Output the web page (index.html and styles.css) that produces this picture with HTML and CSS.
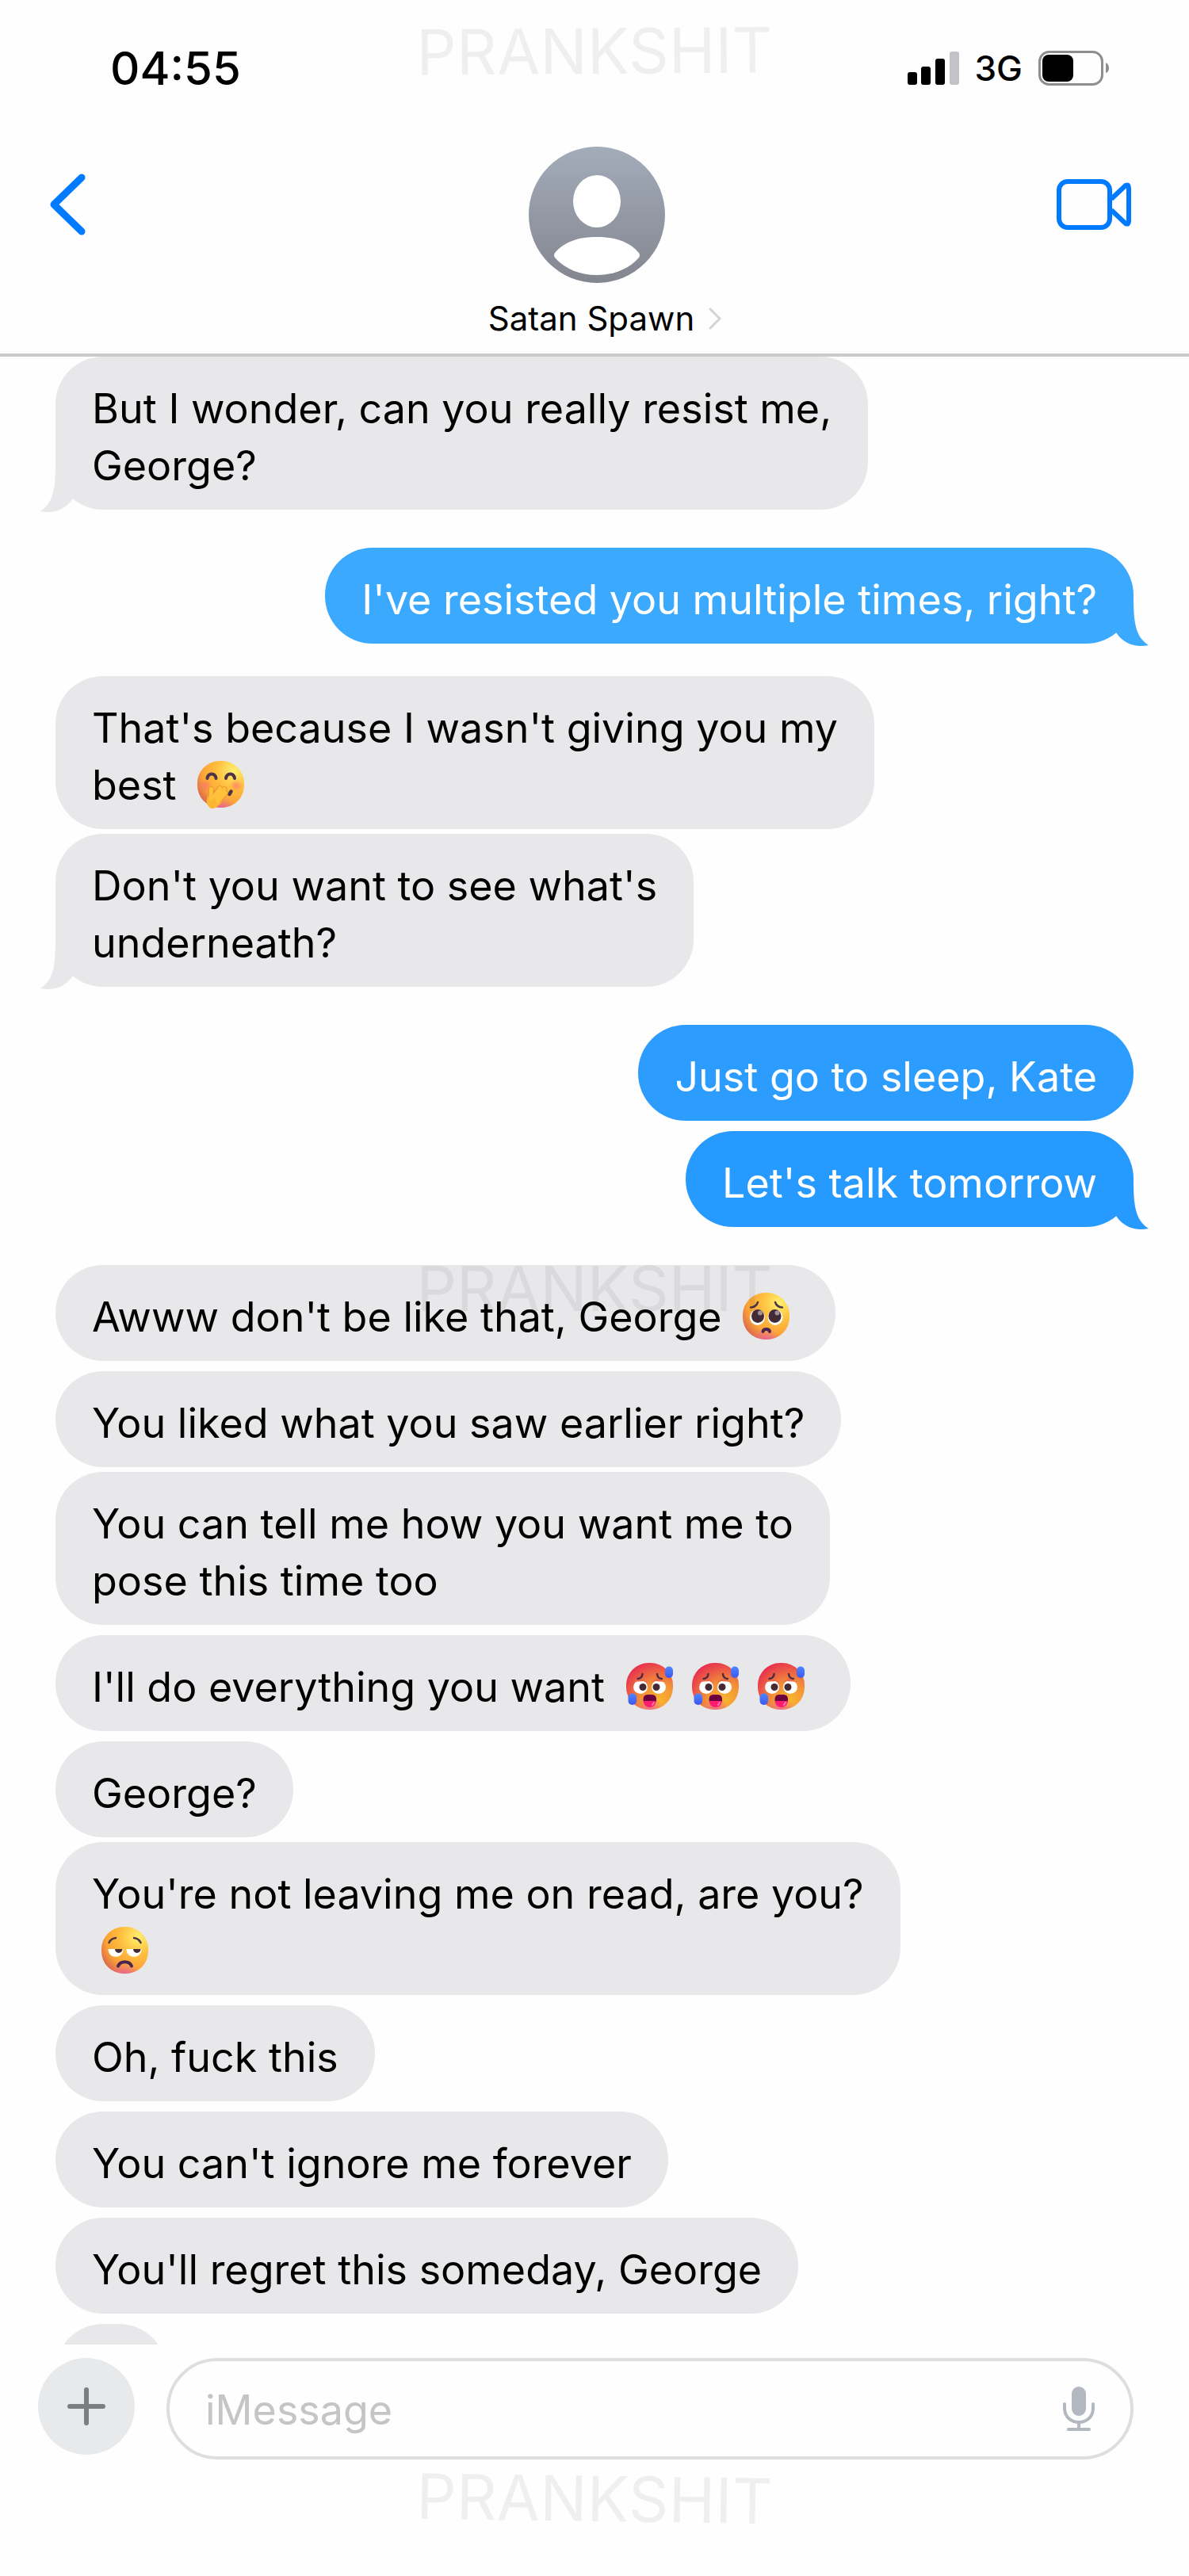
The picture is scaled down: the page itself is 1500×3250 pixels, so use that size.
FILE: index.html
```html
<!DOCTYPE html>
<html lang="en">
<head>
    <meta charset="UTF-8">
    <meta name="viewport" content="width=device-width, initial-scale=1.0">
    <title>Messages</title>
    <link rel="stylesheet" href="styles.css">
</head>
<body>
    <!-- Emoji faces, tails and gradients shared by the messages -->
    <svg class="defs" aria-hidden="true">
        <defs>
            <radialGradient id="face" cx="0.78" cy="0.22" r="0.9">
                <stop offset="0" stop-color="#fff070"/>
                <stop offset="0.4" stop-color="#ffc03f"/>
                <stop offset="0.75" stop-color="#fba437"/>
                <stop offset="1" stop-color="#dc6a4c"/>
            </radialGradient>
            <radialGradient id="chin" cx="0.5" cy="1.08" r="0.35">
                <stop offset="0" stop-color="#e85cb0"/>
                <stop offset="1" stop-color="#f2708a" stop-opacity="0"/>
            </radialGradient>
            <radialGradient id="blush">
                <stop offset="0" stop-color="#ff6f72" stop-opacity="0.7"/>
                <stop offset="1" stop-color="#ff6f72" stop-opacity="0"/>
            </radialGradient>
            <radialGradient id="heat" cx="0.7" cy="0.8" r="0.85">
                <stop offset="0" stop-color="#f9b52e"/>
                <stop offset="0.45" stop-color="#f29138"/>
                <stop offset="1" stop-color="#e8324f"/>
            </radialGradient>
            <linearGradient id="sweat" x2="0" y2="1">
                <stop offset="0" stop-color="#4f86ff"/>
                <stop offset="1" stop-color="#3d58ee"/>
            </linearGradient>
            <linearGradient id="avatar" x2="0" y2="1">
                <stop offset="0" stop-color="#a3acba"/>
                <stop offset="1" stop-color="#84868f"/>
            </linearGradient>
        </defs>
        <symbol id="tail" viewBox="0 0 60 62">
            <path d="M19 0C19 36 15 50 0 60C16 63 31 59 41 44L60 30V0Z"/>
        </symbol>
        <symbol id="giggle" viewBox="0 0 59 60">
            <rect width="59" height="59" rx="28" fill="url(#face)"/>
            <rect width="59" height="59" rx="28" fill="url(#chin)"/>
            <circle cx="10" cy="31" r="8" fill="url(#blush)"/>
            <circle cx="49" cy="31" r="8" fill="url(#blush)"/>
            <g fill="none" stroke="#4b3446" stroke-width="4" stroke-linecap="round">
                <path d="M12.5 22C13.5 14.5 22.5 14.5 23.5 22M36 22C37 14.5 46 14.5 47 22"/>
                <path d="M40.5 42L42.5 38.5" stroke-width="4.5"/>
            </g>
            <path d="M13 45L15 36L21 39L34 39L36 43L30 53Q23 61 17 60Q9 54 13 45Z" fill="#fdb634"/>
            <path d="M17 45L17.5 35.5M21 43L28.5 34.5M25 46L34 35.5M28 49L35.5 40.5" stroke="#e8912c" stroke-width="6.5" stroke-linecap="round"/>
            <path d="M17 47L17.5 35.5M21 45L28.5 34.5M25 48L34 35.5M26 51L35.5 40.5" stroke="#ffc03c" stroke-width="5" stroke-linecap="round"/>
        </symbol>
        <symbol id="pleading" viewBox="0 0 59 60">
            <rect width="59" height="59" rx="28" fill="url(#face)"/>
            <rect width="59" height="59" rx="28" fill="url(#chin)"/>
            <path d="M10 18.5Q17 18 19 12M41 12Q43 18 50 18.5" fill="none" stroke="#4b3446" stroke-width="2.5" stroke-linecap="round"/>
            <ellipse cx="18.5" cy="31" rx="9.5" ry="10" fill="#fff"/>
            <ellipse cx="41" cy="31" rx="9.5" ry="10" fill="#fff"/>
            <ellipse cx="19" cy="29.5" rx="8" ry="8.5" fill="#432a35"/>
            <ellipse cx="40.5" cy="29.5" rx="8" ry="8.5" fill="#432a35"/>
            <circle cx="22" cy="25.5" r="3" fill="#a08f96"/>
            <circle cx="43.5" cy="25.5" r="3" fill="#a08f96"/>
            <path d="M25.500 49C26 45 33.500 45 34 49" fill="none" stroke="#4b2350" stroke-width="4" stroke-linecap="round"/>
        </symbol>
        <symbol id="hot" viewBox="0 0 59 60">
            <rect width="59" height="59" rx="28" fill="url(#heat)"/>
            <rect width="59" height="59" rx="28" fill="url(#chin)"/>
            <ellipse cx="18" cy="30.5" rx="9" ry="8.5" fill="#fff"/>
            <ellipse cx="41" cy="30.5" rx="9" ry="8.5" fill="#fff"/>
            <path d="M9 24L20 19L27 24L22 23ZM50 24L39 19L32 24L37 23Z" fill="#ec6a43"/>
            <path d="M14.5 20Q20 19.5 20.5 14M39 14Q39.5 19.5 45 20" fill="none" stroke="#4b2a42" stroke-width="2.5" stroke-linecap="round"/>
            <circle cx="21" cy="30.5" r="4.5" fill="#432a35"/>
            <circle cx="38" cy="30.5" r="4.5" fill="#432a35"/>
            <path d="M21.5 46Q21.5 40 27 40H32.5Q38 40 38 46Q38 51 35 52H24.5Q21.5 51 21.5 46Z" fill="#6d0240"/>
            <path d="M22 48H37.5Q37 56 29.7 56Q22.5 56 22 48Z" fill="#ff1b70"/>
            <path d="M33 53L35 50" stroke="#ff7db0" stroke-width="2" stroke-linecap="round"/>
            <rect x="49" y="4.5" width="10" height="14.5" rx="5" fill="url(#sweat)"/>
            <rect x="2.5" y="38.5" width="10.5" height="14.5" rx="5" fill="url(#sweat)"/>
        </symbol>
        <symbol id="unamused" viewBox="0 0 59 60">
            <rect width="59" height="59" rx="28" fill="url(#face)"/>
            <rect width="59" height="59" rx="28" fill="url(#chin)"/>
            <path d="M9.5 20Q12 14.5 18 14M41 14Q47 14.5 49.5 20" fill="none" stroke="#4b3446" stroke-width="2.5" stroke-linecap="round"/>
            <path d="M8.5 28H27.5C27.5 41 8.5 41 8.5 28ZM31.5 28H50.5C50.5 41 31.5 41 31.5 28Z" fill="#fff"/>
            <path d="M17 28H26.5C26 34.5 17.5 34.5 17 28ZM40 28H49.5C49 34.5 40.5 34.5 40 28Z" fill="#432a35"/>
            <path d="M21 49.5C24 42.5 35 42.5 38 49.5" fill="none" stroke="#4b2350" stroke-width="4" stroke-linecap="round"/>
        </symbol>
    </svg>

    <div class="phone">
        <header class="header">
            <div class="status">
                <span class="status-time">04:55</span>
                <div class="status-icons">
                    <svg width="65" height="42" viewBox="0 0 65 42" aria-hidden="true">
                        <rect x="0" y="26" width="12" height="16" rx="3"/>
                        <rect x="17" y="19" width="12" height="23" rx="3"/>
                        <rect x="35" y="9" width="12" height="33" rx="3"/>
                        <rect x="53" y="0" width="12" height="42" rx="3" fill="#c3c2c7"/>
                    </svg>
                    <span class="status-network">3G</span>
                    <svg width="90" height="44" viewBox="0 0 90 44" aria-hidden="true">
                        <rect x="1.5" y="1.5" width="79" height="41" rx="12" fill="none" stroke="#8e8e8e" stroke-width="3"/>
                        <rect x="5" y="5" width="39" height="34" rx="8"/>
                        <path d="M85 15Q89 17 89 22T85 28Z" fill="#8e8e8e"/>
                    </svg>
                </div>
            </div>
            <nav class="nav">
                <button class="nav-button" type="button" aria-label="Back">
                    <svg width="52" height="80" viewBox="0 0 52 80" fill="none" stroke="#007aff" stroke-width="9" stroke-linecap="round" stroke-linejoin="round">
                        <path d="M43 6L8 40L43 74"/>
                    </svg>
                </button>
                <div class="contact">
                    <svg width="172" height="172" viewBox="0 0 172 172" aria-hidden="true">
                        <circle cx="86" cy="86" r="86" fill="url(#avatar)"/>
                        <ellipse cx="86" cy="69" rx="30" ry="33" fill="#fff"/>
                        <path d="M33 134C46 119 64 114 86 114S126 119 139 134Q141 137 139 140C126 155 106 162 86 162S46 155 33 140Q31 137 33 134Z" fill="#fff"/>
                    </svg>
                    <a class="contact-name" href="#">
                        Satan Spawn
                        <svg width="16" height="28" viewBox="0 0 16 28" fill="none" stroke="#d3d3d5" stroke-width="3" stroke-linecap="round" aria-hidden="true">
                            <path d="M2 2L14 14L2 26"/>
                        </svg>
                    </a>
                </div>
                <button class="nav-button nav-video" type="button" aria-label="Video call">
                    <svg width="95" height="66" viewBox="0 0 95 66" fill="none" stroke="#007aff" stroke-width="6" stroke-linejoin="round">
                        <rect x="3" y="4" width="64" height="58" rx="11"/>
                        <path d="M69 26L87 9Q91 7 91 12V54Q91 59 87 57L69 40"/>
                    </svg>
                </button>
            </nav>
        </header>

        <main class="chat">
            <section class="group">
                <p class="message long">But I wonder, can you really resist me,<br>George?
                    <svg class="tail" aria-hidden="true"><use href="#tail"/></svg>
                </p>
            </section>
            <section class="group sent">
                <p class="message">I've resisted you multiple times, right?
                    <svg class="tail" aria-hidden="true"><use href="#tail"/></svg>
                </p>
            </section>
            <section class="group">
                <p class="message long">That's because I wasn't giving you my<br>best <svg class="emoji" aria-hidden="true"><use href="#giggle"/></svg></p>
                <p class="message long">Don't you want to see what's<br>underneath?
                    <svg class="tail" aria-hidden="true"><use href="#tail"/></svg>
                </p>
            </section>
            <section class="group sent">
                <p class="message blue-mid">Just go to sleep, Kate</p>
                <p class="message blue-deep">Let's talk tomorrow
                    <svg class="tail" aria-hidden="true"><use href="#tail"/></svg>
                </p>
            </section>
            <section class="group">
                <p class="message">Awww don't be like that, George <svg class="emoji" aria-hidden="true"><use href="#pleading"/></svg></p>
                <p class="message">You liked what you saw earlier right?</p>
                <p class="message long">You can tell me how you want me to<br>pose this time too</p>
                <p class="message">I'll do everything you want <svg class="emoji" aria-hidden="true"><use href="#hot"/></svg><svg class="emoji" aria-hidden="true"><use href="#hot"/></svg><svg class="emoji" aria-hidden="true"><use href="#hot"/></svg></p>
                <p class="message">George?</p>
                <p class="message long">You're not leaving me on read, are you?<br><svg class="emoji" aria-hidden="true"><use href="#unamused"/></svg></p>
                <p class="message">Oh, fuck this</p>
                <p class="message">You can't ignore me forever</p>
                <p class="message">You'll regret this someday, George</p>
                <p class="message"></p>
            </section>
        </main>

        <form class="composer">
            <button class="add" type="button" aria-label="Add attachment">
                <svg width="48" height="48" viewBox="0 0 48 48" stroke="#7d7e82" stroke-width="6" stroke-linecap="round">
                    <path d="M24 3V45M3 24H45"/>
                </svg>
            </button>
            <div class="field">
                <input class="field-input" type="text" placeholder="iMessage" aria-label="iMessage">
                <button class="mic" type="button" aria-label="Dictate">
                    <svg width="40" height="58" viewBox="0 0 40 58" fill="none" stroke="#b3b8c0" stroke-width="4" stroke-linecap="round">
                        <rect x="11" y="1" width="18" height="37" rx="9" fill="#b3b8c0" stroke="none"/>
                        <path d="M2 23V28C2 52 38 52 38 28V23M20 47V54"/>
                        <path d="M7 55H33"/>
                    </svg>
                </button>
            </div>
        </form>

        <span class="watermark top">PRANKSHIT</span>
        <span class="watermark middle">PRANKSHIT</span>
        <span class="watermark bottom">PRANKSHIT</span>
    </div>
</body>
</html>
```

FILE: styles.css
```css
* {
    box-sizing: border-box;
}
body {
    margin: 0;
    background-color: #fefefe;
    color: #000;
    font-family: Inter, "Helvetica Neue", Arial, sans-serif;
    font-size: 52px;
    line-height: 72px;
}
button {
    padding: 0;
    border: none;
    background: none;
    cursor: pointer;
}
svg {
    display: block;
    flex: none;
}
.defs {
    position: absolute;
    width: 0;
    height: 0;
}
.phone {
    position: relative;
    display: flex;
    flex-direction: column;
    height: 100vh;
    overflow: hidden;
}

/* Status bar and contact */
.header {
    border-bottom: 4px solid #cbcbcb;
}
.status {
    display: flex;
    align-items: center;
    justify-content: space-between;
    height: 172px;
    padding: 0 100px 0 139px;
    font-weight: 500;
}
.status-time {
    font-size: 58px;
}
.status-icons {
    display: flex;
    align-items: center;
    gap: 20px;
}
.status-network {
    font-size: 44px;
}
.nav {
    display: grid;
    grid-template-columns: 1fr auto 1fr;
    padding: 0 54px 14px 60px;
}
.nav-button {
    display: flex;
    align-items: center;
    height: 172px;
}
.nav-video {
    justify-content: flex-end;
    padding-right: 18px;
}
.contact {
    display: flex;
    flex-direction: column;
    align-items: center;
    gap: 15px;
    padding-top: 13px;
}
.contact-name {
    display: flex;
    align-items: center;
    gap: 18px;
    margin-right: -20px;
    color: inherit;
    font-size: 42px;
    line-height: 60px;
    text-decoration: none;
}

/* Messages */
.chat {
    flex: 1;
    min-height: 0;
    overflow: hidden;
    padding: 0 70px;
}
.group {
    display: flex;
    flex-direction: column;
    align-items: flex-start;
}
.group + .group {
    margin-top: 35px;
}
.message {
    position: relative;
    min-width: 140px;
    min-height: 121px;
    margin: 13px 0 0;
    padding: 30px 46px 19px;
    border-radius: 60px;
    background-color: #e8e8ea;
    color: #000;
}
.long {
    margin-top: 6px;
}
.group:first-child .message {
    margin-top: 0;
}
.sent {
    align-items: flex-end;
}
.sent .message {
    background-color: #3aa9fe;
    color: #fff;
}
.sent .blue-mid {
    background-color: #2c9dff;
}
.sent .blue-deep {
    background-color: #279aff;
}
.tail {
    position: absolute;
    bottom: -4px;
    left: -19px;
    width: 60px;
    height: 62px;
    fill: #e8e8ea;
}
.sent .tail {
    right: -19px;
    left: auto;
    fill: #3aa9fe;
    transform: scaleX(-1);
}
.sent .blue-deep .tail {
    fill: #279aff;
}
.emoji {
    display: inline-block;
    width: 59px;
    height: 60px;
    margin: -10px 12px;
    vertical-align: -1px;
}

/* Text field */
.composer {
    display: flex;
    align-items: flex-start;
    gap: 40px;
    height: 292px;
    padding: 17px 70px 0 48px;
}
.add {
    display: flex;
    align-items: center;
    justify-content: center;
    width: 122px;
    height: 122px;
    border-radius: 50%;
    background-color: #e7e9ea;
}
.field {
    display: flex;
    flex: 1;
    align-items: center;
    height: 128px;
    padding: 0 45px;
    border: 4px solid #dedede;
    border-radius: 64px;
}
.field-input {
    flex: 1;
    min-width: 0;
    padding: 4px 0 0;
    border: none;
    outline: none;
    background: none;
    color: #000;
    font: inherit;
}
.field-input::placeholder {
    color: #c5c5c7;
    opacity: 1;
}

/* Watermarks */
.watermark {
    position: absolute;
    left: 50%;
    color: rgba(0, 0, 0, 0.06);
    font-size: 79px;
    line-height: 80px;
    pointer-events: none;
}
.top {
    top: 24px;
    transform: translateX(-50%) rotate(-0.4deg);
}
.middle {
    top: 50%;
    transform: translate(-50%, -50%);
}
.bottom {
    bottom: 58px;
    transform: translateX(-50%) rotate(0.8deg);
}
```
